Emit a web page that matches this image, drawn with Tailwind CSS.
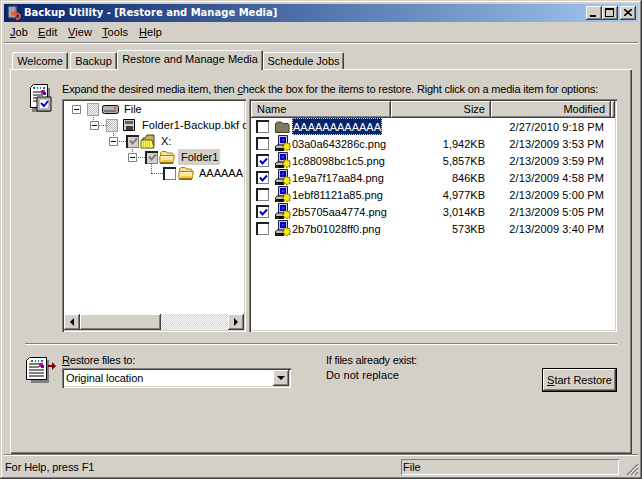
<!DOCTYPE html>
<html>
<head>
<meta charset="utf-8">
<script src="https://cdn.jsdelivr.net/npm/@tailwindcss/browser@4"></script>
</head>
<body class="bg-[#d4d0c8]">
<svg width="0" height="0" class="absolute">
  <defs>
    <symbol id="folder" viewBox="0 0 16 14">
      <path d="M1.500 12V3L3 1.500h4L8.500 3h4.500l1 1v1" fill="#fbe08a" stroke="#a8820c"/>
      <path d="M.8 12.500V6.500L2 5.500h11l2.500 0-1.500 7z" fill="#fde890" stroke="#a8820c"/>
      <path d="M2 6.500h11" stroke="#fff8d8"/>
      <path d="M1 13.300h13" stroke="#8a6808" stroke-width="1.400"/>
      <path d="M14.500 7v6" stroke="#c8a020"/>
      <path d="M3 11.500h10M3 10.500h10" stroke="#eec850"/>
    </symbol>
    <symbol id="pngfile" viewBox="0 0 17 17">
      <path d="M4.500 .5h9v10h-9z" fill="#c8c8d0" stroke="#202040"/>
      <path d="M6 2h6v6H6z" fill="#0000c8"/>
      <path d="M8 4h2v2H8z" fill="#4040ff"/>
      <path d="M1.500 11.500l2-1.500h9v3.500h-11z" fill="#c0c0c0" stroke="#000"/>
      <path d="M1 15h9" stroke="#101010" stroke-width="2"/>
      <path d="M3 15h1" stroke="#00d000" stroke-width="1"/>
      <path d="M10.500 7l1.500 1.500L13.500 7l.5 2 2-.5-.5 2 1.500 1-1.500 1 .5 2.500-2-.5-1 1.500-1.500-1.500-2 .5.500-2-1.500-1 1.500-1.500z" fill="#ffe800" stroke="#302800" stroke-width=".8" stroke-dasharray="1.500 .8"/>
    </symbol>
    <symbol id="check" viewBox="0 0 9 9">
      <path d="M1 3.500l2.500 3L8 1.500" fill="none" stroke="currentColor" stroke-width="2"/>
    </symbol>
    <symbol id="minus" viewBox="0 0 9 9">
      <path d="M.5.500h8v8h-8z" fill="#fff" stroke="#808080"/>
      <path d="M2 4.500h5" stroke="#000"/>
    </symbol>
  </defs>
</svg>

<div class="relative w-[642px] h-[479px] overflow-hidden flex flex-col pt-[4px] pl-[4px] pr-[4px] text-black bg-[#d4d0c8] font-['Liberation_Sans',Arial,sans-serif] text-[11px] leading-[14px] shadow-[inset_-1px_-1px_0_#404040,inset_1px_1px_0_#d4d0c8,inset_-2px_-2px_0_#808080,inset_2px_2px_0_#fff]">

  <!-- Title bar -->
  <div class="h-[18px] w-[634px] shrink-0 flex items-center bg-gradient-to-r from-[#0a246a] to-[#a6caf0] pl-[2px] pr-[2px]">
    <svg class="w-[16px] h-[16px] shrink-0" viewBox="0 0 16 16">
      <path d="M2 1h9v12H2z" fill="#8088a8" stroke="#303040"/>
      <path d="M4 2v10M7 2v10" stroke="#c8ccd8"/>
      <path d="M8 9c4-1 6 0 6 2s-2 3-4 3" fill="none" stroke="#ff5020" stroke-width="2"/>
      <path d="M9 5L5 9l4 3z" fill="#ff5020"/>
    </svg>
    <div class="ml-[2px] text-white font-bold text-[10px] font-['DejaVu_Sans',sans-serif] whitespace-nowrap">Backup Utility - [Restore and Manage Media]</div>
    <div class="ml-auto flex items-center">
      <div class="w-[16px] h-[14px] flex items-end pl-[4px] pb-[3px] bg-[#d4d0c8] shadow-[inset_-1px_-1px_0_#404040,inset_1px_1px_0_#fff,inset_-2px_-2px_0_#808080]"><div class="w-[6px] h-[2px] bg-black"></div></div>
      <div class="w-[16px] h-[14px] flex items-center justify-center bg-[#d4d0c8] shadow-[inset_-1px_-1px_0_#404040,inset_1px_1px_0_#fff,inset_-2px_-2px_0_#808080]"><div class="w-[9px] h-[9px] mb-[1px] mr-[1px] border border-black border-t-2"></div></div>
      <div class="w-[16px] h-[14px] ml-[2px] flex items-center justify-center bg-[#d4d0c8] shadow-[inset_-1px_-1px_0_#404040,inset_1px_1px_0_#fff,inset_-2px_-2px_0_#808080]">
        <svg class="w-[8px] h-[7px] mb-[1px] mr-[1px]" viewBox="0 0 8 7"><path d="M0 0l8 7M8 0L0 7" stroke="#000" stroke-width="1.600"/></svg>
      </div>
    </div>
  </div>

  <!-- Menu bar -->
  <div class="h-[19px] shrink-0 mt-[1px] flex items-center pl-[6px] pb-[1px] tracking-[0.1px]">
    <span class="w-[28px]"><u>J</u>ob</span><span class="w-[30px]"><u>E</u>dit</span><span class="w-[34px]"><u>V</u>iew</span><span class="w-[37px]"><u>T</u>ools</span><span><u>H</u>elp</span>
  </div>
  <div class="h-[2px] shrink-0 border-t border-[#808080] bg-white"></div>

  <!-- Tabs -->
  <div class="h-[25px] shrink-0 flex items-end pl-[8px] relative z-10 whitespace-nowrap">
    <div class="h-[17px] w-[56px] flex items-center justify-center bg-[#d4d0c8] rounded-t-[2px] shadow-[inset_1px_1px_0_#fff,inset_-1px_0_0_#404040,inset_-2px_0_0_#808080]">Welcome</div>
    <div class="h-[17px] w-[47px] ml-[2px] flex items-center justify-center bg-[#d4d0c8] rounded-t-[2px] shadow-[inset_1px_1px_0_#fff,inset_-1px_0_0_#404040,inset_-2px_0_0_#808080]">Backup</div>
    <div class="h-[20px] w-[146px] -mb-[1px] pb-[3px] flex items-center justify-center bg-[#d4d0c8] rounded-t-[2px] shadow-[inset_1px_1px_0_#fff,inset_-1px_0_0_#404040,inset_-2px_0_0_#808080] relative z-20">Restore and Manage Media</div>
    <div class="h-[17px] w-[81px] flex items-center justify-center bg-[#d4d0c8] rounded-t-[2px] shadow-[inset_1px_1px_0_#fff,inset_-1px_0_0_#404040,inset_-2px_0_0_#808080]">Schedule Jobs</div>
  </div>

  <!-- Panel -->
  <div class="ml-[6px] w-[622px] h-[385px] shrink-0 pt-[10px] pl-[15px] flex flex-col shadow-[inset_1px_1px_0_#fff,inset_-1px_-1px_0_#404040,inset_-2px_-2px_0_#808080]">
    <div class="flex h-[263px]">
      <!-- Checklist icon -->
      <svg class="w-[30px] h-[32px] mt-[4px] shrink-0" viewBox="0 0 30 32">
        <path d="M7 5h18v24H7z" fill="#808080"/>
        <path d="M5.500 4.500L8.500 1.500h14v23h-17z" fill="#fff" stroke="#000"/>
        <path d="M8 5h2M12 5h1M15 5h1M18 5h2" stroke="#008080" stroke-width="2"/>
        <path d="M8 9h8M8 12h10M8 15h6M8 18h6" stroke="#000"/>
        <path d="M16 7h4v4h-4z" fill="#e00080"/><path d="M18 9h3v3h-3z" fill="#2020e0"/>
        <path d="M12 14h14v14H12z" fill="#d4d0c8" stroke="#000"/>
        <path d="M14 16h10v10H14z" fill="#fff" stroke="#808080"/>
        <path d="M16 20l3 3 4-5" fill="none" stroke="#0000e0" stroke-width="2"/>
      </svg>
      <div class="ml-[7px] w-[555px] flex flex-col">
        <div class="h-[20px] whitespace-nowrap tracking-[-0.19px] pt-[3px]">Expand the desired media item, then <u>c</u>heck the box for the items to restore. Right click on a media item for options:</div>

        <div class="flex h-[233px]">
          <!-- Tree -->
          <div class="relative w-[184px] h-[233px] bg-white overflow-hidden shadow-[inset_1px_1px_0_#808080,inset_2px_2px_0_#404040,inset_-1px_-1px_0_#fff,inset_-2px_-2px_0_#d4d0c8]">
            <!-- connectors -->
            <div class="absolute left-[31px] top-[15px] h-[6px] border-l border-dotted border-[#606060]"></div>
            <div class="absolute left-[51px] top-[31px] h-[6px] border-l border-dotted border-[#606060]"></div>
            <div class="absolute left-[70px] top-[47px] h-[6px] border-l border-dotted border-[#606060]"></div>
            <div class="absolute left-[89px] top-[65px] h-[9px] border-l border-dotted border-[#606060]"></div>
            <div class="absolute left-[36px] top-[26px] w-[8px] border-t border-dotted border-[#606060]"></div>
            <div class="absolute left-[55px] top-[42px] w-[9px] border-t border-dotted border-[#606060]"></div>
            <div class="absolute left-[74px] top-[58px] w-[9px] border-t border-dotted border-[#606060]"></div>
            <div class="absolute left-[89px] top-[74px] w-[12px] border-t border-dotted border-[#606060]"></div>

            <div class="relative pt-[2px] flex flex-col">
              <div class="h-[16px] flex items-center pl-[10px] whitespace-nowrap">
                <svg class="w-[9px] h-[9px] shrink-0"><use href="#minus"/></svg>
                <div class="ml-[6px] w-[12px] h-[13px] shrink-0 border border-[#a0a0a0] bg-[repeating-conic-gradient(#b8b8b8_0_25%,#fff_0_50%)] bg-[length:2px_2px]"></div>
                <svg class="ml-[3px] w-[17px] h-[9px] shrink-0" viewBox="0 0 17 9"><rect x=".5" y=".5" width="16" height="8" rx="2" fill="#b0b0b0" stroke="#000"/><path d="M2 6h12" stroke="#404040"/><path d="M12 3h2" stroke="#e00000"/></svg>
                <span class="ml-[5px]">File</span>
              </div>
              <div class="h-[16px] flex items-center pl-[28px] whitespace-nowrap">
                <svg class="w-[9px] h-[9px] shrink-0"><use href="#minus"/></svg>
                <div class="ml-[7px] w-[12px] h-[13px] shrink-0 border border-[#a0a0a0] bg-[repeating-conic-gradient(#b8b8b8_0_25%,#fff_0_50%)] bg-[length:2px_2px]"></div>
                <svg class="ml-[5px] w-[12px] h-[12px] shrink-0" viewBox="0 0 12 12"><path d="M.5.500h11v11H.5z" fill="#d4d0c8" stroke="#000"/><path d="M2 2h8v3H2z" fill="#606060"/><path d="M3 7h7v4H3z" fill="#404040"/></svg>
                <span class="ml-[7px] tracking-[0.1px]">Folder1-Backup.bkf c</span>
              </div>
              <div class="h-[16px] flex items-center pl-[47px] whitespace-nowrap">
                <svg class="w-[9px] h-[9px] shrink-0"><use href="#minus"/></svg>
                <div class="ml-[8px] w-[13px] h-[13px] shrink-0 flex items-center justify-center text-[#808080] bg-[#d4d0c8] shadow-[inset_2px_2px_0_#202020,inset_-1px_-1px_0_#808080]"><svg class="w-[9px] h-[9px] ml-[1px] mt-[1px]"><use href="#check"/></svg></div>
                <svg class="ml-[1px] w-[17px] h-[15px] shrink-0" viewBox="0 0 17 15"><path d="M3 4h2l2-3h7v11H3z" fill="#c8b060" stroke="#504010"/><path d="M1 6h11l2 8H1z" fill="#ffff60" stroke="#605010"/><path d="M3 8h8M3 10h8M3 12h8" stroke="#a0a000" stroke-dasharray="1 1"/></svg>
                <span class="ml-[4px]">X:</span>
              </div>
              <div class="h-[16px] flex items-center pl-[66px] whitespace-nowrap">
                <svg class="w-[9px] h-[9px] shrink-0"><use href="#minus"/></svg>
                <div class="ml-[8px] w-[13px] h-[13px] shrink-0 flex items-center justify-center text-[#808080] bg-[#d4d0c8] shadow-[inset_2px_2px_0_#202020,inset_-1px_-1px_0_#808080]"><svg class="w-[9px] h-[9px] ml-[1px] mt-[1px]"><use href="#check"/></svg></div>
                <svg class="ml-[1px] w-[16px] h-[14px] shrink-0"><use href="#folder"/></svg>
                <span class="ml-[3px] h-[16px] w-[42px] flex items-center pl-[3px] bg-[#d4d0c8]">Folder1</span>
              </div>
              <div class="h-[16px] flex items-center pl-[101px] whitespace-nowrap">
                <div class="w-[13px] h-[13px] shrink-0 bg-white shadow-[inset_2px_2px_0_#202020,inset_-1px_-1px_0_#808080]"></div>
                <svg class="ml-[2px] w-[16px] h-[14px] shrink-0"><use href="#folder"/></svg>
                <span class="ml-[5px]">AAAAAA</span>
              </div>
            </div>
            <!-- Horizontal scrollbar -->
            <div class="absolute left-[2px] right-[2px] bottom-[2px] h-[16px] flex bg-[repeating-conic-gradient(#d4d0c8_0_25%,#fff_0_50%)] bg-[length:2px_2px]">
              <div class="w-[16px] h-[16px] flex items-center justify-center bg-[#d4d0c8] shadow-[inset_-1px_-1px_0_#404040,inset_1px_1px_0_#fff,inset_-2px_-2px_0_#808080]"><div class="w-0 h-0 border-y-[4px] border-y-transparent border-r-[4px] border-r-black"></div></div>
              <div class="w-[81px] h-[16px] bg-[#d4d0c8] shadow-[inset_-1px_-1px_0_#404040,inset_1px_1px_0_#fff,inset_-2px_-2px_0_#808080]"></div>
              <div class="ml-auto w-[16px] h-[16px] flex items-center justify-center bg-[#d4d0c8] shadow-[inset_-1px_-1px_0_#404040,inset_1px_1px_0_#fff,inset_-2px_-2px_0_#808080]"><div class="w-0 h-0 border-y-[4px] border-y-transparent border-l-[4px] border-l-black"></div></div>
            </div>
          </div>

          <!-- File list -->
          <div class="ml-[3px] w-[368px] h-[233px] bg-white p-[2px] flex flex-col overflow-hidden shadow-[inset_1px_1px_0_#808080,inset_2px_2px_0_#404040,inset_-1px_-1px_0_#fff,inset_-2px_-2px_0_#d4d0c8]">
            <div class="h-[17px] shrink-0 flex bg-[#d4d0c8] leading-[16px]">
              <div class="w-[140px] pl-[6px] shadow-[inset_-1px_-1px_0_#404040,inset_1px_1px_0_#fff,inset_-2px_-2px_0_#808080]">Name</div>
              <div class="w-[100px] pr-[6px] text-right shadow-[inset_-1px_-1px_0_#404040,inset_1px_1px_0_#fff,inset_-2px_-2px_0_#808080]">Size</div>
              <div class="w-[120px] pr-[6px] text-right shadow-[inset_-1px_-1px_0_#404040,inset_1px_1px_0_#fff,inset_-2px_-2px_0_#808080]">Modified</div>
              <div class="flex-1 shadow-[inset_-1px_-1px_0_#404040,inset_1px_1px_0_#fff,inset_-2px_-2px_0_#808080]"></div>
            </div>
            <div class="flex flex-col">
              <div class="h-[17px] flex items-center">
                <div class="ml-[5px] w-[13px] h-[13px] shrink-0 bg-white shadow-[inset_2px_2px_0_#202020,inset_-1px_-1px_0_#808080]"></div>
                <svg class="ml-[5px] w-[17px] h-[14px] shrink-0" viewBox="0 0 16 14"><path d="M1 12.500V3.500L3 2h4l1.500 1.500h5l1 1v8z" fill="#807860" stroke="#403c28"/></svg>
                <span class="ml-[1px] w-[90px] h-[17px] flex items-center pl-[1px] bg-[#0a246a] text-white outline-1 outline-dotted -outline-offset-1 outline-[#d4d0c8]">AAAAAAAAAAAA</span>
                <span class="ml-[103px] w-[119px] text-right tracking-[0.1px]">2/27/2010 9:18 PM</span>
              </div>
              <div class="h-[17px] flex items-center">
                <div class="ml-[5px] w-[13px] h-[13px] shrink-0 bg-white shadow-[inset_2px_2px_0_#202020,inset_-1px_-1px_0_#808080]"></div>
                <svg class="ml-[5px] w-[17px] h-[17px] shrink-0"><use href="#pngfile"/></svg>
                <span class="ml-[1px] w-[94px]">03a0a643286c.png</span>
                <span class="w-[99px] text-right">1,942KB</span>
                <span class="w-[119px] text-right tracking-[0.1px]">2/13/2009 3:53 PM</span>
              </div>
              <div class="h-[17px] flex items-center">
                <div class="ml-[5px] w-[13px] h-[13px] shrink-0 flex items-center justify-center text-[#0000d0] bg-white shadow-[inset_2px_2px_0_#202020,inset_-1px_-1px_0_#808080]"><svg class="w-[9px] h-[9px] ml-[1px] mt-[1px]"><use href="#check"/></svg></div>
                <svg class="ml-[5px] w-[17px] h-[17px] shrink-0"><use href="#pngfile"/></svg>
                <span class="ml-[1px] w-[94px]">1c88098bc1c5.png</span>
                <span class="w-[99px] text-right">5,857KB</span>
                <span class="w-[119px] text-right tracking-[0.1px]">2/13/2009 3:59 PM</span>
              </div>
              <div class="h-[17px] flex items-center">
                <div class="ml-[5px] w-[13px] h-[13px] shrink-0 flex items-center justify-center text-[#0000d0] bg-white shadow-[inset_2px_2px_0_#202020,inset_-1px_-1px_0_#808080]"><svg class="w-[9px] h-[9px] ml-[1px] mt-[1px]"><use href="#check"/></svg></div>
                <svg class="ml-[5px] w-[17px] h-[17px] shrink-0"><use href="#pngfile"/></svg>
                <span class="ml-[1px] w-[94px]">1e9a7f17aa84.png</span>
                <span class="w-[99px] text-right">846KB</span>
                <span class="w-[119px] text-right tracking-[0.1px]">2/13/2009 4:58 PM</span>
              </div>
              <div class="h-[17px] flex items-center">
                <div class="ml-[5px] w-[13px] h-[13px] shrink-0 bg-white shadow-[inset_2px_2px_0_#202020,inset_-1px_-1px_0_#808080]"></div>
                <svg class="ml-[5px] w-[17px] h-[17px] shrink-0"><use href="#pngfile"/></svg>
                <span class="ml-[1px] w-[94px]">1ebf81121a85.png</span>
                <span class="w-[99px] text-right">4,977KB</span>
                <span class="w-[119px] text-right tracking-[0.1px]">2/13/2009 5:00 PM</span>
              </div>
              <div class="h-[17px] flex items-center">
                <div class="ml-[5px] w-[13px] h-[13px] shrink-0 flex items-center justify-center text-[#0000d0] bg-white shadow-[inset_2px_2px_0_#202020,inset_-1px_-1px_0_#808080]"><svg class="w-[9px] h-[9px] ml-[1px] mt-[1px]"><use href="#check"/></svg></div>
                <svg class="ml-[5px] w-[17px] h-[17px] shrink-0"><use href="#pngfile"/></svg>
                <span class="ml-[1px] w-[94px]">2b5705aa4774.png</span>
                <span class="w-[99px] text-right">3,014KB</span>
                <span class="w-[119px] text-right tracking-[0.1px]">2/13/2009 5:05 PM</span>
              </div>
              <div class="h-[17px] flex items-center">
                <div class="ml-[5px] w-[13px] h-[13px] shrink-0 bg-white shadow-[inset_2px_2px_0_#202020,inset_-1px_-1px_0_#808080]"></div>
                <svg class="ml-[5px] w-[17px] h-[17px] shrink-0"><use href="#pngfile"/></svg>
                <span class="ml-[1px] w-[94px]">2b7b01028ff0.png</span>
                <span class="w-[99px] text-right">573KB</span>
                <span class="w-[119px] text-right tracking-[0.1px]">2/13/2009 3:40 PM</span>
              </div>
            </div>
          </div>
        </div>
      </div>
    </div>

    <!-- Separator -->
    <div class="w-[592px] h-[2px] mt-[1px] shrink-0 border-t border-[#808080] bg-white"></div>

    <!-- Bottom row -->
    <div class="flex mt-[10px]">
      <svg class="w-[32px] h-[30px] shrink-0" viewBox="0 0 32 30">
        <path d="M6 5h18v23H6z" fill="#808080"/>
        <path d="M1.500 5.500L4.500 2.500h17v22h-20z" fill="#fff" stroke="#000"/>
        <path d="M6 6h2M10 6h1M13 6h1M16 6h2" stroke="#008080" stroke-width="2"/>
        <path d="M4 9h10M4 12h10M4 15h15M4 18h15" stroke="#000"/>
        <path d="M4 21h15" stroke="#808080" stroke-width="2"/>
        <path d="M14 8h4v4h-4z" fill="#e00080"/><path d="M16 10h3v3h-3z" fill="#2020e0"/>
        <path d="M23 10h4V7l4 4-4 4v-3h-4z" fill="#800000"/>
      </svg>
      <div class="ml-[5px] w-[229px] flex flex-col">
        <div class="h-[13px] leading-[11px] tracking-[-0.2px]"><u>R</u>estore files to:</div>
        <div class="h-[20px] bg-white flex items-center pl-[4px] pr-[2px] shadow-[inset_1px_1px_0_#808080,inset_2px_2px_0_#404040,inset_-1px_-1px_0_#fff,inset_-2px_-2px_0_#d4d0c8]">
          <span class="tracking-[-0.1px]">Original location</span>
          <div class="ml-auto w-[16px] h-[16px] flex items-center justify-center bg-[#d4d0c8] shadow-[inset_-1px_-1px_0_#404040,inset_1px_1px_0_#fff,inset_-2px_-2px_0_#808080]"><div class="w-0 h-0 border-x-[4px] border-x-transparent border-t-[4px] border-t-black"></div></div>
        </div>
      </div>
      <div class="ml-[35px] flex flex-col w-[216px]">
        <div class="h-[15px] leading-[11px] tracking-[-0.25px]">If files already exist:</div>
        <div class="h-[15px] leading-[11px] tracking-[0.1px]">Do not replace</div>
      </div>
      <div class="mt-[13px] w-[75px] h-[24px] flex items-center justify-center bg-[#d4d0c8] shadow-[inset_0_0_0_1px_#000,inset_-2px_-2px_0_#404040,inset_2px_2px_0_#fff,inset_-3px_-3px_0_#808080]"><span><u>S</u>tart Restore</span></div>
    </div>
  </div>

  <!-- Status bar -->
  <div class="h-[2px] shrink-0 border-t border-[#808080] bg-white"></div>
  <div class="h-[16px] mt-[3px] shrink-0 flex items-center pl-[1px]">
    <span class="tracking-[-0.1px]">For Help, press F1</span>
    <div class="ml-auto mr-[19px] w-[218px] h-[16px] flex items-center pl-[2px] shadow-[inset_1px_1px_0_#808080,inset_-1px_-1px_0_#fff]">File</div>
  </div>
  <svg class="absolute right-[3px] bottom-[3px] w-[13px] h-[13px]" viewBox="0 0 13 13">
    <path d="M12 1L1 12M12 5L5 12M12 9L9 12" stroke="#808080" stroke-width="1.500"/>
    <path d="M12 3L3 12M12 7L7 12M12 11L11 12" stroke="#fff"/>
  </svg>
</div>
</body>
</html>
